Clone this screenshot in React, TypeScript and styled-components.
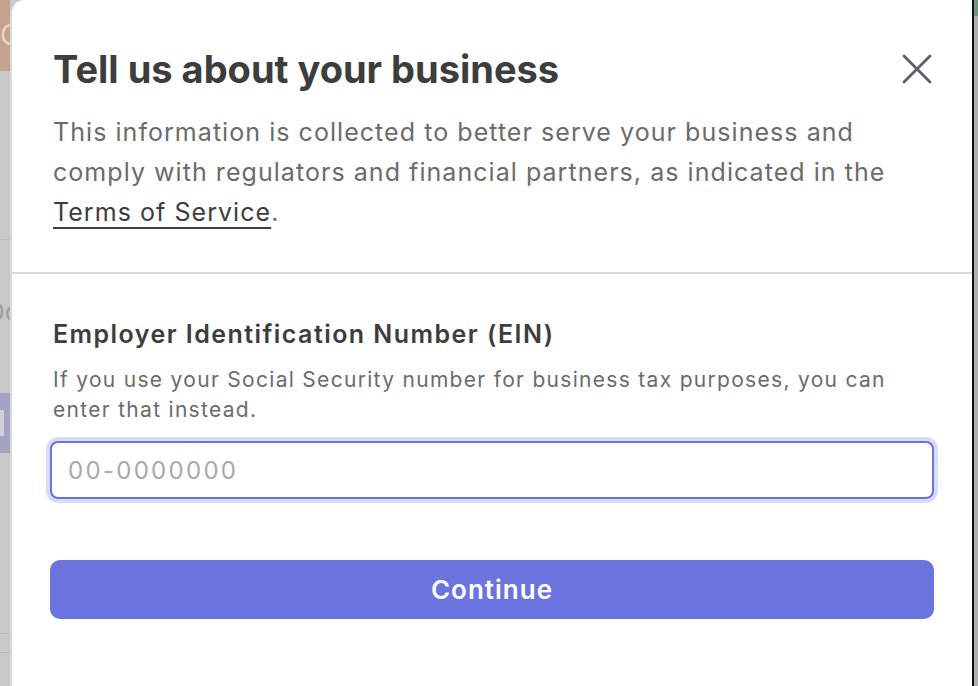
import styled, { createGlobalStyle } from "styled-components";

const GlobalStyle = createGlobalStyle`
    html, body {
        margin : 0;
        padding : 0;
        background : #c8c8c8;
        font-family : Inter, "Liberation Sans", sans-serif;
    }
`

const Page = styled.div`
    display : flex;
    flex-direction : row;
    width : 978px;
    height : 686px;
    overflow : hidden;
`

const BackStrip = styled.div`
    width : 10px;
    display : flex;
    flex-direction : column;
    background : #c8c8c8;
    flex-shrink : 0;

    & .tan{
        height : 71px;
        background : #c5a28e;
        color : #e4d3c9;
        font-size : 28px;
        line-height : 71px;
        overflow : hidden;
        white-space : nowrap;
    }
    & .rule{
        height : 1px;
        background : #bcbcbc;
    }
    & .word{
        height : 40px;
        color : #9e9e9e;
        font-size : 26px;
        line-height : 40px;
        overflow : hidden;
        white-space : nowrap;
        text-indent : -14px;
    }
    & .purple{
        height : 60px;
        background : #a3a3c4;
        display : flex;
        align-items : center;
    }
    & .purple span{
        width : 4px;
        height : 26px;
        background : #d0d0dc;
    }
`

const Spacer = styled.div<{ h: number }>`
    height : ${p => p.h}px;
    flex-shrink : 0;
`

const Modal = styled.div`
    width : 960px;
    flex-shrink : 0;
    background : #fff;
    border-left : 2px solid #d8d8d8;
    border-top-left-radius : 14px;
    display : flex;
    flex-direction : column;
`

const Header = styled.div`
    padding : 47px 41px 40px 41px;
    border-bottom : 2px solid #dadada;
`

const TitleRow = styled.div`
    display : flex;
    flex-direction : row;
    justify-content : space-between;
    align-items : center;
    margin-bottom : 21px;
`

const Title = styled.h1`
    margin : 0;
    font-size : 38px;
    line-height : 44px;
    font-weight : 700;
    color : #3d3d3d;
    letter-spacing : 0px;
`

const CloseButton = styled.button`
    border : none;
    background : none;
    padding : 0;
    width : 32px;
    height : 32px;
    display : flex;
    align-items : center;
    justify-content : center;
    cursor : pointer;
    margin-right : -2px;
`

const Intro = styled.p`
    margin : 0;
    font-size : 25px;
    line-height : 40px;
    letter-spacing : 1.05px;
    color : #6b6b6b;

    & a{
        color : #3d3d3d;
        text-decoration : underline;
        text-underline-offset : 6px;
        text-decoration-thickness : 2px;
    }
`

const Body = styled.div`
    padding : 44px 38px 0 38px;
    display : flex;
    flex-direction : column;
`

const Label = styled.label`
    font-size : 25px;
    line-height : 32px;
    font-weight : 600;
    letter-spacing : 1.45px;
    color : #3d3d3d;
    padding : 0 3px;
`

const Help = styled.p`
    margin : 15px 0 16px 0;
    max-width : 850px;
    font-size : 21px;
    line-height : 30px;
    letter-spacing : 1.3px;
    color : #6b6b6b;
    padding : 0 3px;
`

const Input = styled.input`
    height : 58px;
    box-sizing : border-box;
    border : 2px solid #6a72de;
    border-radius : 8px;
    box-shadow : 0 0 0 4px #d9dbf7;
    padding : 0 16px;
    font-family : Inter, "Liberation Sans", sans-serif;
    font-size : 24px;
    letter-spacing : 2.3px;
    color : #333;
    outline : none;

    &::placeholder{
        color : #a9a9a9;
    }
`

const ContinueButton = styled.button`
    margin-top : 61px;
    height : 59px;
    border : none;
    border-radius : 10px;
    background : #6a73de;
    color : #fff;
    font-family : Inter, "Liberation Sans", sans-serif;
    font-size : 26px;
    font-weight : 600;
    letter-spacing : 1px;
    cursor : pointer;
`

const RightStrip = styled.div`
    flex : 1;
    border-left : 2px solid #111;
    background : #b0b0b0;
    display : flex;
    flex-direction : column;

    & .green{
        height : 16px;
        background : #6f9680;
    }
`

const CloseIcon = () => (
    <svg width="30" height="30" viewBox="0 0 30 30" fill="none">
        <path d="M2 2 L28 28 M28 2 L2 28" stroke="#5b5f6e" strokeWidth="2.8" strokeLinecap="round" />
    </svg>
)

const App = () => {
    return (
        <>
            <GlobalStyle />
            <Page>
                <BackStrip>
                    <div className="tan">Co</div>
                    <Spacer h={168} />
                    <div className="rule" />
                    <Spacer h={52} />
                    <div className="word">Doc</div>
                    <Spacer h={61} />
                    <div className="purple"><span /></div>
                    <Spacer h={180} />
                    <div className="rule" />
                    <Spacer h={18} />
                    <div className="rule" />
                </BackStrip>

                <Modal>
                    <Header>
                        <TitleRow>
                            <Title>Tell us about your business</Title>
                            <CloseButton aria-label="Close"><CloseIcon /></CloseButton>
                        </TitleRow>
                        <Intro>
                            This information is collected to better serve your business and comply with regulators and financial partners, as indicated in the <a href="#">Terms of Service</a>.
                        </Intro>
                    </Header>

                    <Body>
                        <Label htmlFor="ein">Employer Identification Number (EIN)</Label>
                        <Help>If you use your Social Security number for business tax purposes, you can enter that instead.</Help>
                        <Input id="ein" placeholder="00-0000000" />
                        <ContinueButton>Continue</ContinueButton>
                    </Body>
                </Modal>

                <RightStrip>
                    <div className="green" />
                </RightStrip>
            </Page>
        </>
    )
}

export default App;
